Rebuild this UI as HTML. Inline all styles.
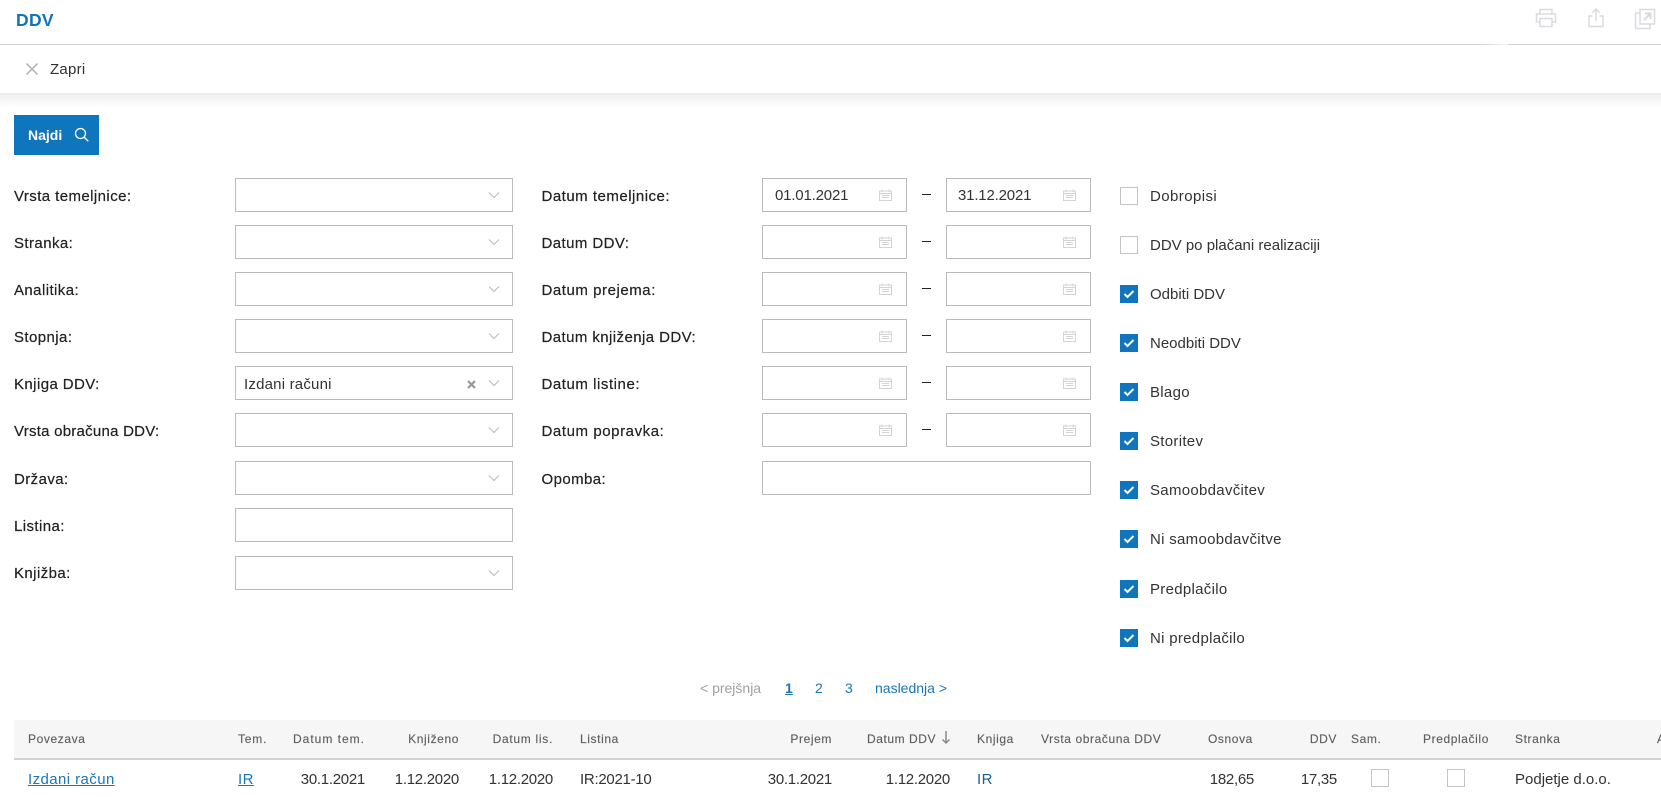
<!DOCTYPE html>
<html lang="sl">
<head>
<meta charset="utf-8">
<title>DDV</title>
<style>
html,body{margin:0;padding:0;background:#fff;}
body{position:relative;width:1661px;height:797px;overflow:hidden;font-family:"Liberation Sans",Arial,sans-serif;font-size:15px;letter-spacing:.42px;color:#333;}
.a{position:absolute;white-space:nowrap;line-height:20px;}
.l{position:absolute;left:14px;white-space:nowrap;line-height:20px;color:#222;-webkit-text-stroke:.2px #222;}
.m{left:541.500px;}
.c{left:1150px;position:absolute;white-space:nowrap;line-height:20px;color:#333;letter-spacing:.3px;}
.s,.d{position:absolute;box-sizing:border-box;height:34px;border:1px solid #bbb;background:#fff;}
.s{left:235px;width:278px;}
.d{width:145px;}
.d1{left:762px;}
.d2{left:946px;}
.s svg,.d svg{position:absolute;}
.s svg{left:252px;top:12px;}
.d svg{left:116px;top:10px;}
.v{letter-spacing:-.18px;}
.dash{position:absolute;left:922px;width:9px;height:1px;background:#222;}
.b{position:absolute;left:1120px;box-sizing:border-box;width:18px;height:18px;border:1px solid #c4c4c4;background:#fff;}
.k{border:0;background:#0f75bc;}
.k svg{position:absolute;left:3px;top:4px;}
.h{position:absolute;top:731px;font-size:12px;line-height:16px;letter-spacing:.6px;color:#5f5f5f;white-space:nowrap;-webkit-text-stroke:.15px #5f5f5f;}
.r{position:absolute;top:770px;line-height:20px;white-space:nowrap;color:#333;}
.n{letter-spacing:-.28px;}
a{color:#1a76b8;}
</style>
</head>
<body>
<svg width="0" height="0" style="position:absolute">
<symbol id="chev" viewBox="0 0 12 8"><path d="M1 1.500l5 5 5-5" fill="none" stroke="#bbb" stroke-width="1.100"/></symbol>
<symbol id="cal" viewBox="0 0 13 12"><path d="M.5 2h12v9.500H.5zM.5 4.500h12M3 .5v3M10 .5v3M3 6.500h7M3 8.500h7" fill="none" stroke="#d2d4d6" stroke-width="1"/></symbol>
<symbol id="chk" viewBox="0 0 12 10"><path d="M1.500 5l3 3 6-6" fill="none" stroke="#fff" stroke-width="2"/></symbol>
</svg>

<!-- Header -->
<div class="a" style="left:16px;top:10px;font-size:17.500px;font-weight:bold;color:#1373b7;letter-spacing:.3px;">DDV</div>
<svg class="a" style="left:1535px;top:8px" width="22" height="20" viewBox="0 0 22 20" fill="none" stroke="#d9dbdf" stroke-width="1.500"><path d="M5 6V1.500h12V6M5 14H1.500V6h19v8H17M5 10.500h12v8H5z"/></svg>
<svg class="a" style="left:1587px;top:7px" width="18" height="21" viewBox="0 0 18 21" fill="none" stroke="#d9dbdf" stroke-width="1.500"><path d="M5.500 9H2v10.500h14V9h-3.500M9 14V2M5.500 5.500L9 2l3.500 3.500"/></svg>
<svg class="a" style="left:1634px;top:8px" width="22" height="22" viewBox="0 0 22 22" fill="none" stroke="#d9dbdf" stroke-width="1.500"><path d="M6 1.500h14.500V16H6zM6 5H1.500v15.500H16V16"/><path d="M10 12l6-6M11 5.500h5.500V11" stroke-width="2"/></svg>
<div style="position:absolute;left:0;top:44px;width:1480px;height:1px;background:#d2d2d2;"></div>
<div style="position:absolute;left:1480px;top:44px;width:28px;height:1px;background:linear-gradient(90deg,#d2d2d2,#f4f4f4);"></div>
<div style="position:absolute;left:1508px;top:44px;width:153px;height:1px;background:#d2d2d2;"></div>

<!-- Toolbar -->
<div style="position:absolute;left:0;top:93px;width:1661px;height:16px;background:linear-gradient(180deg,#ececec,#f7f7f7 50%,#fff);"></div>
<svg class="a" style="left:25px;top:62px" width="14" height="14" viewBox="0 0 14 14"><path d="M1.500 1.500l11 11M12.500 1.500l-11 11" stroke="#aaa" stroke-width="1.300"/></svg>
<div class="a" style="left:50px;top:60px;color:#333;letter-spacing:.25px;">Zapri</div>

<!-- Button -->
<div style="position:absolute;left:14px;top:115px;width:85px;height:40px;background:#0f75bc;"></div>
<div class="a" style="left:28px;top:125px;font-size:14px;font-weight:bold;color:#fff;letter-spacing:0;">Najdi</div>
<svg class="a" style="left:74px;top:127px" width="15" height="15" viewBox="0 0 15 15" fill="none" stroke="#fff" stroke-width="1.300"><circle cx="6.500" cy="6.500" r="5"/><path d="M10 10l4.300 4.300"/></svg>

<!-- Column 1 -->
<div class="l" style="top:187px;">Vrsta temeljnice:</div>
<div class="l" style="top:234px;">Stranka:</div>
<div class="l" style="top:281px;">Analitika:</div>
<div class="l" style="top:328px;">Stopnja:</div>
<div class="l" style="top:375px;">Knjiga DDV:</div>
<div class="l" style="top:422px;letter-spacing:.25px;">Vrsta obračuna DDV:</div>
<div class="l" style="top:470px;">Država:</div>
<div class="l" style="top:517px;">Listina:</div>
<div class="l" style="top:564px;">Knjižba:</div>

<div class="s" style="top:178px;"><svg width="12" height="8"><use href="#chev"/></svg></div>
<div class="s" style="top:225px;"><svg width="12" height="8"><use href="#chev"/></svg></div>
<div class="s" style="top:272px;"><svg width="12" height="8"><use href="#chev"/></svg></div>
<div class="s" style="top:319px;"><svg width="12" height="8"><use href="#chev"/></svg></div>
<div class="s" style="top:366px;"><svg width="12" height="8"><use href="#chev"/></svg>
<div class="a" style="left:8px;top:8px;letter-spacing:.2px;">Izdani računi</div>
<svg style="left:231px;top:13px" width="9" height="9" viewBox="0 0 9 9"><path d="M1 1l7 7M8 1L1 8" stroke="#999" stroke-width="2.200"/></svg></div>
<div class="s" style="top:413px;"><svg width="12" height="8"><use href="#chev"/></svg></div>
<div class="s" style="top:461px;"><svg width="12" height="8"><use href="#chev"/></svg></div>
<div class="s" style="top:508px;"></div>
<div class="s" style="top:556px;"><svg width="12" height="8"><use href="#chev"/></svg></div>

<!-- Column 2 -->
<div class="l m" style="top:187px;letter-spacing:.5px;">Datum temeljnice:</div>
<div class="l m" style="top:234px;">Datum DDV:</div>
<div class="l m" style="top:281px;letter-spacing:.55px;">Datum prejema:</div>
<div class="l m" style="top:328px;">Datum knjiženja DDV:</div>
<div class="l m" style="top:375px;letter-spacing:.55px;">Datum listine:</div>
<div class="l m" style="top:422px;letter-spacing:.58px;">Datum popravka:</div>
<div class="l m" style="top:470px;">Opomba:</div>

<div class="d d1" style="top:178px;"><div class="a v" style="left:12px;top:7px;">01.01.2021</div><svg width="13" height="12"><use href="#cal"/></svg></div>
<div class="dash" style="top:194px;"></div>
<div class="d d2" style="top:178px;"><div class="a v" style="left:11px;top:7px;">31.12.2021</div><svg width="13" height="12"><use href="#cal"/></svg></div>
<div class="d d1" style="top:225px;"><svg width="13" height="12"><use href="#cal"/></svg></div>
<div class="dash" style="top:241px;"></div>
<div class="d d2" style="top:225px;"><svg width="13" height="12"><use href="#cal"/></svg></div>
<div class="d d1" style="top:272px;"><svg width="13" height="12"><use href="#cal"/></svg></div>
<div class="dash" style="top:288px;"></div>
<div class="d d2" style="top:272px;"><svg width="13" height="12"><use href="#cal"/></svg></div>
<div class="d d1" style="top:319px;"><svg width="13" height="12"><use href="#cal"/></svg></div>
<div class="dash" style="top:335px;"></div>
<div class="d d2" style="top:319px;"><svg width="13" height="12"><use href="#cal"/></svg></div>
<div class="d d1" style="top:366px;"><svg width="13" height="12"><use href="#cal"/></svg></div>
<div class="dash" style="top:382px;"></div>
<div class="d d2" style="top:366px;"><svg width="13" height="12"><use href="#cal"/></svg></div>
<div class="d d1" style="top:413px;"><svg width="13" height="12"><use href="#cal"/></svg></div>
<div class="dash" style="top:429px;"></div>
<div class="d d2" style="top:413px;"><svg width="13" height="12"><use href="#cal"/></svg></div>
<div class="d d1" style="top:461px;width:329px;"></div>

<!-- Column 3 -->
<div class="b" style="top:187px;"></div><div class="c" style="top:187px;letter-spacing:.42px;">Dobropisi</div>
<div class="b" style="top:236px;"></div><div class="c" style="top:236px;letter-spacing:0;">DDV po plačani realizaciji</div>
<div class="b k" style="top:285px;"><svg width="12" height="10"><use href="#chk"/></svg></div><div class="c" style="top:285px;letter-spacing:0;">Odbiti DDV</div>
<div class="b k" style="top:334px;"><svg width="12" height="10"><use href="#chk"/></svg></div><div class="c" style="top:334px;letter-spacing:0;">Neodbiti DDV</div>
<div class="b k" style="top:383px;"><svg width="12" height="10"><use href="#chk"/></svg></div><div class="c" style="top:383px;">Blago</div>
<div class="b k" style="top:432px;"><svg width="12" height="10"><use href="#chk"/></svg></div><div class="c" style="top:432px;">Storitev</div>
<div class="b k" style="top:481px;"><svg width="12" height="10"><use href="#chk"/></svg></div><div class="c" style="top:481px;">Samoobdavčitev</div>
<div class="b k" style="top:530px;"><svg width="12" height="10"><use href="#chk"/></svg></div><div class="c" style="top:530px;">Ni samoobdavčitve</div>
<div class="b k" style="top:580px;"><svg width="12" height="10"><use href="#chk"/></svg></div><div class="c" style="top:580px;">Predplačilo</div>
<div class="b k" style="top:629px;"><svg width="12" height="10"><use href="#chk"/></svg></div><div class="c" style="top:629px;">Ni predplačilo</div>

<!-- Pagination -->
<div class="a" style="left:700px;top:678px;font-size:14px;letter-spacing:0;color:#a0a0a0;">&lt; prejšnja</div>
<div class="a" style="left:785px;top:678px;font-size:14px;font-weight:bold;letter-spacing:0;color:#1a76b8;text-decoration:underline;">1</div>
<div class="a" style="left:815px;top:678px;font-size:14px;letter-spacing:0;color:#1a76b8;">2</div>
<div class="a" style="left:845px;top:678px;font-size:14px;letter-spacing:0;color:#1a76b8;">3</div>
<div class="a" style="left:875px;top:678px;font-size:14px;letter-spacing:0;color:#1a76b8;">naslednja &gt;</div>

<!-- Table head -->
<div style="position:absolute;left:14px;top:720px;width:1647px;height:38px;background:#f6f6f6;"></div>
<div style="position:absolute;left:14px;top:758px;width:1647px;height:2px;background:#d2d2d2;"></div>
<div class="h" style="left:28px;">Povezava</div>
<div class="h" style="left:238px;letter-spacing:.8px;">Tem.</div>
<div class="h" style="right:1296px;letter-spacing:1px;">Datum tem.</div>
<div class="h" style="right:1202px;">Knjiženo</div>
<div class="h" style="right:1108px;letter-spacing:.7px;">Datum lis.</div>
<div class="h" style="left:580px;">Listina</div>
<div class="h" style="right:829px;">Prejem</div>
<div class="h" style="right:725px;letter-spacing:.55px;">Datum DDV</div>
<svg class="a" style="left:941px;top:730px" width="10" height="15" viewBox="0 0 10 15" fill="none" stroke="#8a8a8a" stroke-width="1.500"><path d="M5 1v12M1.500 9.500L5 13l3.500-3.500"/></svg>
<div class="h" style="left:977px;">Knjiga</div>
<div class="h" style="left:1041px;">Vrsta obračuna DDV</div>
<div class="h" style="left:1208px;">Osnova</div>
<div class="h" style="right:324px;">DDV</div>
<div class="h" style="left:1351px;">Sam.</div>
<div class="h" style="left:1423px;">Predplačilo</div>
<div class="h" style="left:1515px;">Stranka</div>
<div class="h" style="left:1657px;">A</div>

<!-- Row -->
<a class="r" style="left:28px;color:#1a76b8;text-decoration:underline;" href="#">Izdani račun</a>
<a class="r" style="left:238px;color:#1a76b8;text-decoration:underline;" href="#">IR</a>
<div class="r n" style="right:1296px;">30.1.2021</div>
<div class="r n" style="right:1202px;">1.12.2020</div>
<div class="r n" style="right:1108px;">1.12.2020</div>
<div class="r n" style="left:580px;">IR:2021-10</div>
<div class="r n" style="right:829px;">30.1.2021</div>
<div class="r n" style="right:711px;">1.12.2020</div>
<div class="r" style="left:977px;color:#1d5f94;">IR</div>
<div class="r n" style="right:407px;">182,65</div>
<div class="r n" style="right:324px;">17,35</div>
<div class="b" style="left:1371px;top:769px;"></div>
<div class="b" style="left:1447px;top:769px;"></div>
<div class="r" style="left:1515px;letter-spacing:0;">Podjetje d.o.o.</div>
</body>
</html>
